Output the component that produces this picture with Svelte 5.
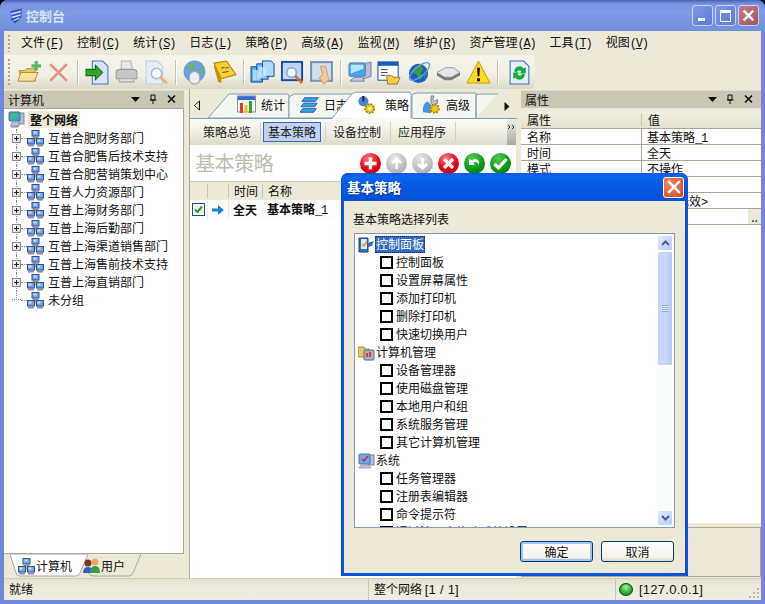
<script lang="ts">
  const menus = [
    { label: "文件", key: "F" },
    { label: "控制", key: "C" },
    { label: "统计", key: "S" },
    { label: "日志", key: "L" },
    { label: "策略", key: "P" },
    { label: "高级", key: "A" },
    { label: "监视", key: "M" },
    { label: "维护", key: "R" },
    { label: "资产管理", key: "A" },
    { label: "工具", key: "T" },
    { label: "视图", key: "V" },
  ];

  const groups = [
    "互普合肥财务部门",
    "互普合肥售后技术支持",
    "互普合肥营销策划中心",
    "互普人力资源部门",
    "互普上海财务部门",
    "互普上海后勤部门",
    "互普上海渠道销售部门",
    "互普上海售前技术支持",
    "互普上海直销部门",
  ];

  const props = [
    { name: "名称", value: "基本策略", tail: "_1" },
    { name: "时间", value: "全天" },
    { name: "模式", value: "不操作" },
    { name: "告警", value: "" },
    { name: "状态", value: "", tail: "<", after: "策略无效", end: ">" },
    { name: "备注", value: "", more: true },
  ];

  const policy = [
    { type: "panel", title: "控制面板", items: ["控制面板", "设置屏幕属性", "添加打印机", "删除打印机", "快速切换用户"] },
    { type: "manage", title: "计算机管理", items: ["设备管理器", "使用磁盘管理", "本地用户和组", "系统服务管理", "其它计算机管理"] },
    { type: "system", title: "系统", items: ["任务管理器", "注册表编辑器", "命令提示符", "通过注册表修改系统设置"] },
  ];
</script>

{#snippet net()}
  <svg class="i16" viewBox="0 0 17 17">
    <path d="M8.500 6v4M3.500 10.500h10" stroke="#e0a818" stroke-width="2" fill="none" />
    <rect x="5" y="0.500" width="7" height="5.500" fill="#6fa6ea" stroke="#3c4f96" />
    <rect x="6.500" y="1.500" width="3" height="2" fill="#c4e0ff" />
    <rect x="5.500" y="6" width="6" height="2" fill="#8a90aa" />
    <rect x="0.500" y="8.500" width="7" height="5.500" fill="#6fa6ea" stroke="#3c4f96" />
    <rect x="1.500" y="9.500" width="3" height="2" fill="#c4e0ff" />
    <rect x="1" y="14" width="6" height="2.500" fill="#8a90aa" />
    <rect x="9.500" y="8.500" width="7" height="5.500" fill="#6fa6ea" stroke="#3c4f96" />
    <rect x="10.500" y="9.500" width="3" height="2" fill="#c4e0ff" />
    <rect x="10" y="14" width="6" height="2.500" fill="#8a90aa" />
  </svg>
{/snippet}

{#snippet pc()}
  <svg class="i16" viewBox="0 0 17 17">
    <rect x="11" y="2" width="5" height="11" fill="#b8bed0" stroke="#7c84a0" />
    <rect x="1" y="1" width="11" height="9" rx="1" fill="#3f9ae8" stroke="#5a6a9a" />
    <path d="M2.500 2.500h8v3l-8 3z" fill="#3cc06a" />
    <path d="M4 11h6l1.500 3.500h-9z" fill="#c2c6d4" stroke="#7c84a0" stroke-width=".6" />
    <ellipse cx="6.500" cy="15.500" rx="4.500" ry="1.300" fill="#9ba1b6" />
  </svg>
{/snippet}

<div class="win">
  <header class="title">
    <svg class="shield" viewBox="0 0 16 16">
      <path d="M2.500 3L14 .5l-1 9.500-6 5.500-4-4z" fill="#2f56c8" />
      <path d="M3 6l10-2.500M3.500 9.500l9-2.500M5.500 12.500l6-2.500" stroke="#d2e0ff" stroke-width="1.300" />
    </svg>
    <span class="title-text">控制台</span>
    <div class="caption">
      <button class="cap" aria-label="最小化"><i class="min"></i></button>
      <button class="cap" aria-label="最大化"><i class="max"></i></button>
      <button class="cap close" aria-label="关闭">
        <svg viewBox="0 0 12 12"><path d="M1.500 1.500l9 9M10.500 1.500l-9 9" stroke="#fff" stroke-width="2.200" /></svg>
      </button>
    </div>
  </header>

  <div class="inner">
    <nav class="menubar">
      <i class="grip"></i>
      {#each menus as m}
        <span class="menu">{m.label}<span class="lat">(<u>{m.key}</u>)</span></span>
      {/each}
    </nav>

    <div class="toolbar">
      <i class="grip tall"></i>
      <span class="tb">
        <svg viewBox="0 0 26 26">
          <path d="M2 11h6l2-2h9v13H5z" fill="#e8c868" stroke="#b49238" />
          <path d="M1 22l3-9h18l-4 9z" fill="#f6e3a0" stroke="#b49238" />
          <path d="M20 1v10M15 6h10" stroke="#5cb85c" stroke-width="3.400" />
        </svg>
      </span>
      <span class="tb">
        <svg viewBox="0 0 24 24"><path d="M4 4l16 16M20 4L4 20" stroke="#e6908c" stroke-width="2.600" /></svg>
      </span>
      <i class="sep"></i>
      <span class="tb">
        <svg viewBox="0 0 24 24">
          <path d="M7 1h10l5 5v17H7z" fill="#d6e6f8" stroke="#4c74b0" />
          <path d="M1 9h9V5l7 7-7 7v-4H1z" fill="#2fa62f" stroke="#146a14" />
        </svg>
      </span>
      <span class="tb">
        <svg viewBox="0 0 24 24">
          <path d="M7 1h9l2 9H7z" fill="#e6e6e6" stroke="#b4b4b4" />
          <path d="M2 12q0-3 4-3h12q4 0 4 3v6H2z" fill="#c6c6c6" stroke="#9c9c9c" />
          <path d="M5 18h14v3H5z" fill="#e2e2e2" stroke="#a6a6a6" />
        </svg>
      </span>
      <span class="tb">
        <svg viewBox="0 0 24 24">
          <path d="M2 1h11l5 5v17H2z" fill="#e4ecf6" stroke="#c0cee0" />
          <circle cx="12" cy="13" r="5" fill="#fff" stroke="#a8bcd0" stroke-width="1.500" />
          <path d="M16 17l6 5" stroke="#e8b078" stroke-width="2.600" />
        </svg>
      </span>
      <i class="sep"></i>
      <span class="tb">
        <svg viewBox="0 0 24 24">
          <circle cx="12" cy="11" r="10.500" fill="#6fa0d8" />
          <path d="M4 8q5-7 10-5-2 5-6 6zM16 6l5 4-3 4z" fill="#6cb46c" />
          <path d="M7 17a5 6 0 0110 0v2a5 4 0 01-10 0z" fill="#eee" stroke="#aaa" />
        </svg>
      </span>
      <span class="tb">
        <svg viewBox="0 0 24 24">
          <path d="M2 3l12-2 9 13-14 4z" fill="#fad030" stroke="#b08810" />
          <path d="M2 3l7 15 0 4-3-1-4-14z" fill="#c89008" />
          <path d="M9 8l3-1M13 8l3-1M10 12l6-1" stroke="#555" stroke-width="1" />
        </svg>
      </span>
      <i class="sep"></i>
      <span class="tb">
        <svg viewBox="0 0 26 26">
          <path d="M1 7h9l3 3v13H1z" fill="#5aa4ec" stroke="#1a4aa0" />
          <path d="M7 4h9l3 3v13H7z" fill="#7cc0f4" stroke="#1a4aa0" />
          <path d="M13 1h9l3 3v13H13z" fill="#aadcfa" stroke="#1a4aa0" />
          <path d="M3 10v11h8V11zM9 7v11h8V8z" fill="#cfeeff" opacity=".7" />
        </svg>
      </span>
      <span class="tb">
        <svg viewBox="0 0 26 26">
          <rect x="2" y="2" width="21" height="19" fill="#bcd8f6" stroke="#1a4aa0" stroke-width="2" />
          <circle cx="12" cy="13" r="5" fill="#f0f8ff" stroke="#8aa4c4" stroke-width="1.500" />
          <path d="M16 17l7 7" stroke="#e46a20" stroke-width="3" />
        </svg>
      </span>
      <span class="tb">
        <svg viewBox="0 0 24 24">
          <rect x="2" y="2" width="20" height="18" fill="#cfe0f2" stroke="#7e94b4" stroke-width="2" />
          <path d="M11 6h5l3 13-5 4-4-6 3-3z" fill="#eec8a0" stroke="#d49e70" />
        </svg>
      </span>
      <i class="sep"></i>
      <span class="tb">
        <svg viewBox="0 0 26 26">
          <path d="M16 4l8-2v15l-8 3z" fill="#b8bcd4" stroke="#7c82a4" />
          <rect x="1" y="3" width="17" height="14" rx="1.500" fill="#3fa8f0" stroke="#6c789c" />
          <path d="M3 5h13v4L3 14z" fill="#b6e4ff" />
          <path d="M6 18h8l3 4H2z" fill="#c6cada" stroke="#7c82a4" />
        </svg>
      </span>
      <span class="tb">
        <svg viewBox="0 0 26 26">
          <rect x="1" y="2" width="21" height="19" fill="#fff" stroke="#1a4aa0" />
          <rect x="1" y="2" width="21" height="4" fill="#1a5cc0" />
          <path d="M4 10h7M4 13h7M4 16h5" stroke="#444" />
          <path d="M10 16h5l2 2h7l-3 7H11z" fill="#f6cc48" stroke="#9c7a1c" />
        </svg>
      </span>
      <span class="tb">
        <svg viewBox="0 0 26 26">
          <circle cx="12" cy="14" r="10" fill="#1a60c8" />
          <path d="M8 7l6-2 3 4-3 5 2 4-3 3-3-6-4-2zM18 13l3 1-3 5z" fill="#3c9c3c" />
          <ellipse cx="13" cy="12" rx="13" ry="5" fill="none" stroke="#64a0e0" stroke-width="1.400" transform="rotate(-40 13 12)" />
        </svg>
      </span>
      <span class="tb">
        <svg viewBox="0 0 26 26">
          <path d="M1 13l9-5h8l7 5-9 5H9z" fill="#e6e6e6" stroke="#9a9a9a" />
          <path d="M1 13v3l8 5h7l9-5v-3l-9 5H9z" fill="#7c7c7c" />
        </svg>
      </span>
      <span class="tb">
        <svg viewBox="0 0 26 26">
          <path d="M13 1l12 23H1z" fill="#ffd91c" stroke="#c49a10" />
          <path d="M11.500 8h3l-.6 9h-1.800zM11.500 19h3v3h-3z" fill="#111" />
        </svg>
      </span>
      <i class="sep"></i>
      <span class="tb refresh">
        <svg viewBox="0 0 24 24">
          <path d="M3 1h13l5 5v17H3z" fill="#e4f0fc" stroke="#3c6cb0" />
          <path d="M7 11a5 5 0 019-3l2-1v6h-6l2-2a3 3 0 00-5 1zM17 14a5 5 0 01-9 3l-2 1v-6h6l-2 2a3 3 0 005-1z" fill="#1fa83a" />
        </svg>
      </span>
    </div>

    <div class="panes">
      <aside class="left">
        <div class="pane-head">
          <span>计算机</span>
          <svg class="head-btns" viewBox="0 0 48 11">
            <path d="M0 3h9L4.500 8z" fill="#111" />
            <path d="M20 1v5h4V1zM19 6h6.500M22 6v4" stroke="#111" fill="none" />
            <path d="M37 1.500l7 7M44 1.500l-7 7" stroke="#111" stroke-width="1.600" />
          </svg>
        </div>
        <div class="tree">
          <div class="root">
            {@render pc()}
            <b>整个网络</b>
          </div>
          {#each groups as g}
            <div class="node">
              <i class="plus"></i>
              {@render net()}
              <span>{g}</span>
            </div>
          {/each}
          <div class="node last">
            <i class="noplus"></i>
            {@render net()}
            <span>未分组</span>
          </div>
        </div>
        <div class="bottom-tabs">
          <svg class="tab-shape" viewBox="0 0 140 24">
            <path d="M72 0l6 10 3 10q1 2 4 2h36q3 0 4-3l8-19" fill="#ece9d8" stroke="#aca899" />
            <path d="M2 0l6 19q1 3 4 3h56q3 0 4-3l8-19z" fill="#fff" stroke="#aca899" />
          </svg>
          <span class="btab first">{@render net()}<span>计算机</span></span>
          <span class="btab">
            <svg class="i16" viewBox="0 0 17 17">
              <circle cx="5" cy="5" r="3.500" fill="#7a3a1c" />
              <path d="M0 15q0-6 5-6t5 6z" fill="#3c5cc8" />
              <circle cx="12" cy="4" r="3.500" fill="#f0a860" />
              <path d="M7 15q0-7 5-7t5 7z" fill="#3c9c4c" />
            </svg>
            <span>用户</span>
          </span>
        </div>
      </aside>

      <main class="center">
        <div class="tabs">
          <svg class="tab-shape" viewBox="0 0 327 29">
            <path d="M18 28L39 4h58q2 0 2 2v22z" fill="#f6f6f0" stroke="#7f9db9" />
            <path d="M99 28V7l5-3h58l2 3v21z" fill="#f6f6f0" stroke="#7f9db9" />
            <path d="M222 28V5q3-2 5-2h59v25M286 28V6q-1-2 4-2h18" fill="#f6f6f0" stroke="#7f9db9" />
            <path d="M0 28.500h143M223 28.500h104" stroke="#7f9db9" fill="none" />
          </svg>
          <span class="tab-arrow">
            <svg viewBox="0 0 8 11"><path d="M6.500 1v9L1.500 5.500z" fill="#fff" stroke="#111" /></svg>
          </span>
          <span class="tab stat">
            <svg class="i20" viewBox="0 0 20 20">
              <rect x="0.500" y="1" width="18" height="4" fill="#3a6ad0" />
              <rect x="0.500" y="1" width="18" height="16" fill="none" stroke="#7d8fb8" />
              <rect x="3" y="8" width="3" height="10" fill="#e04020" />
              <rect x="7.500" y="10" width="3" height="8" fill="#f0c020" />
              <rect x="12" y="6" width="3" height="12" fill="#30a030" />
            </svg>
            统计
          </span>
          <span class="tab log">
            <svg class="i20" viewBox="0 0 22 20">
              <path d="M5 2h15l-3 4H2zM4 8h15l-3 4H1zM3 14h15l-3 4H0z" fill="#3e9ee6" stroke="#1c5aa8" />
            </svg>
            日志
          </span>
          <svg class="active-shape" viewBox="0 0 82 29">
            <path d="M0 28.500L20 4q2-2 5-2h53q2 0 2 3v24H0z" fill="#fff" />
            <path d="M0 28.500L20 4q2-2 5-2h53q2 0 2 3v24" fill="none" stroke="#7f9db9" />
          </svg>
          <span class="tab act">
            <svg class="i20" viewBox="0 0 22 20">
              <circle cx="7" cy="6" r="5.500" fill="#4a86c8" />
              <path d="M7 0v6" stroke="#123" stroke-width="2" />
              <circle cx="14" cy="14" r="5" fill="#f4c818" stroke="#a08000" stroke-dasharray="2 1.400" stroke-width="2" />
              <circle cx="14" cy="14" r="2" fill="#fff6c0" />
            </svg>
            策略
          </span>
          <span class="tab adv">
            <svg class="i20" viewBox="0 0 22 20">
              <path d="M10 0l3 0-1 4 2 2 3-2v4l-5 2-2-2z" fill="#c2c2ca" stroke="#777" />
              <path d="M1 18q-1-9 5-12l6 6-2 7z" fill="#4a90e0" />
              <circle cx="14" cy="14" r="4.500" fill="#f4c818" stroke="#a08000" stroke-dasharray="2 1.400" stroke-width="2" />
            </svg>
            高级
          </span>
          <span class="tab-arrow right">
            <svg viewBox="0 0 8 11"><path d="M1.500 1v9l5-4.500z" fill="#111" /></svg>
          </span>
        </div>

        <div class="subbar">
          <span class="sub">策略总览</span><i class="subsep"></i>
          <span class="sub on">基本策略</span><i class="subsep"></i>
          <span class="sub">设备控制</span><i class="subsep"></i>
          <span class="sub">应用程序</span><i class="subsep"></i>
          <span class="subend">
            <svg viewBox="0 0 7 5"><path d="M0 0l2 2-2 2M4 0l2 2-2 2" fill="none" stroke="#333" /></svg>
          </span>
        </div>

        <div class="plan-head">
          <span class="plan-title">基本策略</span>
          <div class="rounds">
            <span class="round red"><svg viewBox="0 0 21 21"><path d="M10.500 4.500v12M4.500 10.500h12" stroke="#fff" stroke-width="3.400" /></svg></span>
            <span class="round grey"><svg viewBox="0 0 21 21"><path d="M10.500 16V6M6 10l4.500-4.500L15 10" fill="none" stroke="#fff" stroke-width="2.600" /></svg></span>
            <span class="round grey"><svg viewBox="0 0 21 21"><path d="M10.500 5v10M6 11l4.500 4.500L15 11" fill="none" stroke="#fff" stroke-width="2.600" /></svg></span>
            <span class="round red"><svg viewBox="0 0 21 21"><path d="M6 6l9 9M15 6l-9 9" stroke="#fff" stroke-width="3.200" /></svg></span>
            <span class="round green"><svg viewBox="0 0 21 21"><path d="M5 6v6h6l-2-2q4-3 6 2 1-6-4-6-2 0-3 1.500z" fill="#fff" /></svg></span>
            <span class="round green"><svg viewBox="0 0 21 21"><path d="M4.500 11l4 4 8-9" fill="none" stroke="#fff" stroke-width="3.200" /></svg></span>
          </div>
        </div>

        <div class="table-head">
          <span></span><span></span><span>时间</span><span>名称</span>
        </div>
        <div class="table-row">
          <span class="cell-check">
            <i class="green-check">
              <svg viewBox="0 0 11 11"><path d="M2 5.500l2.500 2.500 4.500-5.500" fill="none" stroke="#1fa02f" stroke-width="2" /></svg>
            </i>
          </span>
          <span class="cell-check">
            <svg class="row-arrow" viewBox="0 0 12 10"><path d="M0 3.500h6V0l6 5-6 5V6.500H0z" fill="#1c84d8" /></svg>
          </span>
          <b>全天</b>
          <b>基本策略<span class="lat">_1</span></b>
        </div>
      </main>

      <aside class="right">
        <div class="pane-head">
          <span>属性</span>
          <svg class="head-btns" viewBox="0 0 48 11">
            <path d="M0 3h9L4.500 8z" fill="#111" />
            <path d="M20 1v5h4V1zM19 6h6.500M22 6v4" stroke="#111" fill="none" />
            <path d="M37 1.500l7 7M44 1.500l-7 7" stroke="#111" stroke-width="1.600" />
          </svg>
        </div>
        <div class="grid">
          <div class="grid-head"><span>属性</span><span>值</span></div>
          {#each props as p}
            <div class="grid-row">
              <span>{p.name}</span>
              <span class="val">
                <span class="v">{p.value}{#if p.tail}<span class="lat">{p.tail}</span>{/if}{p.after ?? ""}{#if p.end}<span class="lat">{p.end}</span>{/if}</span>
                {#if p.more}<i class="more">..</i>{/if}
              </span>
            </div>
          {/each}
          <div class="grid-fill"></div>
          <div class="desc"><div class="desc-box"></div></div>
        </div>
      </aside>
    </div>

    <footer class="status">
      <span class="st one">就绪</span>
      <span class="st two">整个网络 <span class="lats">[1 / 1]</span></span>
      <span class="st three">
        <i class="led"></i>
        <span class="lats">[127.0.0.1]</span>
        <svg class="size-grip" viewBox="0 0 12 12">
          <path d="M9 1h2v2H9zM5 5h2v2H5zM9 5h2v2H9zM1 9h2v2H1zM5 9h2v2H5zM9 9h2v2H9z" fill="#bdb9a6" />
        </svg>
      </span>
    </footer>
  </div>

  <section class="dialog">
    <div class="dlg-title">
      <span>基本策略</span>
      <button class="dlg-close" aria-label="关闭">
        <svg viewBox="0 0 12 12"><path d="M1 1l10 10M11 1L1 11" stroke="#fff" stroke-width="2.200" /></svg>
      </button>
    </div>
    <div class="dlg-body">
      <p class="dlg-label">基本策略选择列表</p>
      <div class="listbox">
        <div class="list">
          {#each policy as g}
            <div class="group" class:first={g.type === "panel"}>
              {#if g.type === "panel"}
                <svg class="i16" viewBox="0 0 17 17">
                  <path d="M1 2h9v14H1z" fill="#2f6ec0" stroke="#1c3c80" />
                  <path d="M3 3h6v10H3z" fill="#dfeaf8" />
                  <path d="M4 8l2 2 3-5" fill="none" stroke="#e0a020" stroke-width="1.500" />
                  <path d="M10 7l6-2-2 5-4 1z" fill="#2f6ec0" />
                </svg>
              {:else if g.type === "manage"}
                <svg class="i16" viewBox="0 0 17 17">
                  <path d="M0 3h6l1 2h4v8H0z" fill="#e6c468" stroke="#a88a30" />
                  <rect x="6" y="6" width="10" height="10" rx="1" fill="#a8b0c8" stroke="#60688a" />
                  <path d="M8 13V9h2v4zM11 13V8h2v5z" fill="#d04030" />
                </svg>
              {:else}
                <svg class="i16" viewBox="0 0 17 17">
                  <rect x="10" y="3" width="6" height="10" fill="#b8bed0" stroke="#7c84a0" />
                  <rect x="1" y="2" width="11" height="10" rx="1" fill="#66aaee" stroke="#5a6a9a" />
                  <path d="M4 7l2 2 4-5" fill="none" stroke="#d02030" stroke-width="1.500" />
                  <path d="M3 13h8l2 3H1z" fill="#c2c6d4" stroke="#7c84a0" stroke-width=".6" />
                </svg>
              {/if}
              <span class="gt">{g.title}</span>
            </div>
            {#each g.items as item}
              <div class="item"><i class="box"></i><span>{item}</span></div>
            {/each}
          {/each}
        </div>
        <div class="scroll">
          <span class="sb">
            <svg viewBox="0 0 9 6"><path d="M1 5l3.500-3.500L8 5" fill="none" stroke="#4d6185" stroke-width="2" /></svg>
          </span>
          <span class="thumb"><i></i></span>
          <span class="track"></span>
          <span class="sb">
            <svg viewBox="0 0 9 6"><path d="M1 1l3.500 3.500L8 1" fill="none" stroke="#4d6185" stroke-width="2" /></svg>
          </span>
        </div>
      </div>
      <div class="dlg-actions">
        <button class="btn def">确定</button>
        <button class="btn">取消</button>
      </div>
    </div>
  </section>
</div>

<style>
  :global(body) {
    margin: 0;
    background: #000;
  }
  .win {
    position: relative;
    width: 765px;
    height: 604px;
    overflow: hidden;
    display: flex;
    flex-direction: column;
    background: #7088dc;
    border-radius: 8px 8px 0 0;
    font: 12px/16px "Noto Sans CJK SC", "Liberation Sans", sans-serif;
    color: #111;
  }
  i {
    font-style: normal;
    display: block;
    flex: none;
  }
  svg {
    display: block;
    flex: none;
  }
  .lat {
    font: 12px/16px "Liberation Mono", monospace;
    letter-spacing: -1.200px;
  }
  .lats {
    font: 13px/16px "Liberation Sans", sans-serif;
    letter-spacing: 0.250px;
  }
  .i16 {
    width: 17px;
    height: 17px;
  }
  .i20 {
    width: 20px;
    height: 20px;
  }

  /* title bar */
  .title {
    height: 31px;
    flex: none;
    display: flex;
    align-items: center;
    padding: 0 5px 0 8px;
    box-sizing: border-box;
    background: linear-gradient(#4a62b8 0, #7694e2 4px, #7f9de4 12px, #7090dc 30px);
  }
  .shield {
    width: 16px;
    height: 16px;
  }
  .title-text {
    margin-left: 2px;
    font-size: 13px;
    font-weight: 700;
    color: #d8e2f6;
  }
  .caption {
    margin-left: auto;
    display: flex;
    gap: 2px;
    margin-right: 1px;
  }
  .cap {
    width: 21px;
    height: 21px;
    padding: 0;
    display: flex;
    align-items: center;
    justify-content: center;
    border: 1px solid #c8d4f4;
    border-radius: 3px;
    background: linear-gradient(135deg, #7d9ae8, #5a78d8);
  }
  .cap.close {
    background: linear-gradient(135deg, #c07f8c, #a8505c);
  }
  .cap.close svg {
    width: 13px;
    height: 13px;
  }
  .min {
    width: 7px;
    height: 3px;
    background: #fff;
    margin-top: 8px;
    margin-right: 3px;
  }
  .max {
    width: 9px;
    height: 8px;
    border: 1px solid #fff;
    border-top-width: 3px;
  }

  .inner {
    flex: 1;
    margin: 0 4px 4px;
    display: flex;
    flex-direction: column;
    background: #ece9d8;
    min-height: 0;
  }

  /* menu + toolbar */
  .menubar {
    height: 24px;
    flex: none;
    display: flex;
    align-items: center;
    padding-left: 4px;
  }
  .grip {
    width: 2px;
    height: 17px;
    margin-right: 9px;
    background: repeating-linear-gradient(#a9a691 0 2px, transparent 2px 4px);
  }
  .grip.tall {
    height: 26px;
    margin-right: 7px;
  }
  .menu {
    margin: 0 12px 0 2px;
    white-space: nowrap;
  }
  .toolbar {
    height: 34px;
    width: 531px;
    flex: none;
    box-sizing: border-box;
    display: flex;
    align-items: center;
    padding-left: 4px;
    background: linear-gradient(#f6f5ec, #f1efe4 60%, #dcd9c6);
    border-radius: 0 5px 5px 0;
  }
  .tb {
    width: 24px;
    height: 26px;
    margin-right: 5.500px;
    display: flex;
    align-items: center;
    justify-content: center;
  }
  .tb svg {
    width: 25px;
    height: 25px;
  }
  .tb.refresh {
    margin-left: 3px;
  }
  .sep {
    width: 1px;
    height: 25px;
    margin: 0 6px 0 1px;
    background: #c5c2b0;
    border-right: 1px solid #fff;
  }

  .panes {
    flex: 1;
    min-height: 0;
    display: flex;
  }

  /* side panels */
  .left {
    width: 180px;
    flex: none;
    display: flex;
    flex-direction: column;
    padding-top: 1px;
    box-sizing: border-box;
  }
  .pane-head {
    height: 18px;
    flex: none;
    display: flex;
    align-items: center;
    padding: 0 5px 0 4px;
    background: #c9c6b5;
    border-top: 1px solid #dfdccb;
    box-sizing: border-box;
    font-size: 12px;
  }
  .head-btns {
    width: 48px;
    height: 11px;
    margin-left: auto;
  }
  .tree {
    flex: 1;
    background: #fff;
    border: 1px solid #aca899;
    border-left: 0;
    box-sizing: border-box;
    min-height: 0;
  }
  .root {
    height: 19px;
    display: flex;
    align-items: center;
    padding-left: 4px;
    margin-top: 1px;
  }
  .root b {
    margin-left: 3px;
    padding: 1px 2px 0;
    background: #ece9d8;
    height: 17px;
    box-sizing: border-box;
  }
  .node {
    height: 18px;
    display: flex;
    align-items: center;
    padding-left: 8px;
    position: relative;
  }
  .node::before {
    content: "";
    position: absolute;
    left: 12px;
    top: 0;
    height: 18px;
    border-left: 1px dotted #8a8a8a;
  }
  .node::after {
    content: "";
    position: absolute;
    left: 17px;
    top: 9px;
    width: 6px;
    border-top: 1px dotted #8a8a8a;
  }
  .node.last::before {
    height: 9px;
  }
  .plus {
    width: 9px;
    height: 9px;
    box-sizing: border-box;
    border: 1px solid #8e8e8e;
    background:
      linear-gradient(#222, #222) center / 5px 1px no-repeat,
      linear-gradient(#222, #222) center / 1px 5px no-repeat,
      linear-gradient(135deg, #fff, #d8d4c8);
    position: relative;
    z-index: 1;
  }
  .noplus {
    width: 9px;
    height: 1px;
    border-top: 1px dotted #8a8a8a;
  }
  .node svg {
    margin-left: 6px;
  }
  .node span {
    margin-left: 4px;
    white-space: nowrap;
  }
  .bottom-tabs {
    height: 24px;
    flex: none;
    position: relative;
    display: flex;
    align-items: center;
  }
  .tab-shape {
    position: absolute;
    left: 4px;
    top: 0;
    width: 140px;
    height: 24px;
  }
  .btab {
    position: relative;
    display: flex;
    align-items: center;
    gap: 1px;
    margin-left: 11px;
  }
  .btab.first {
    margin-left: 14px;
  }

  /* centre */
  .center {
    width: 327px;
    margin-left: 5px;
    flex: none;
    background: #fff;
    border-left: 1px solid #aca899;
    box-sizing: border-box;
    display: flex;
    flex-direction: column;
  }
  .tabs {
    height: 30px;
    flex: none;
    position: relative;
    background: #ece9d8;
    display: flex;
    align-items: center;
    padding-top: 2px;
    box-sizing: border-box;
  }
  .tabs .tab-shape {
    left: 0;
    top: 1px;
    width: 327px;
    height: 29px;
  }
  .active-shape {
    position: absolute;
    left: 142px;
    top: 1px;
    width: 81px;
    height: 29px;
    z-index: 2;
  }
  .tab-arrow {
    position: relative;
    margin-left: 3px;
    width: 8px;
    height: 11px;
    flex: none;
  }
  .tab-arrow svg {
    width: 8px;
    height: 11px;
  }
  .tab-arrow.right {
    margin-left: 33px;
    z-index: 3;
  }
  .tab {
    position: relative;
    display: flex;
    align-items: center;
    gap: 4px;
    white-space: nowrap;
    flex: none;
  }
  .tab.stat {
    margin-left: 36px;
  }
  .tab.log {
    margin-left: 15px;
  }
  .tab.act {
    margin-left: 9px;
    z-index: 3;
    gap: 8px;
  }
  .tab.adv {
    margin-left: 13px;
  }
  .subbar {
    height: 26px;
    flex: none;
    display: flex;
    align-items: center;
    padding-left: 8px;
    background: linear-gradient(#fbfbf6, #f0efe6 50%, #dedbca);
    color: #222;
  }
  .sub {
    box-sizing: border-box;
    width: 58px;
    height: 20px;
    line-height: 18px;
    text-align: center;
    border: 1px solid transparent;
    white-space: nowrap;
  }
  .sub.on {
    background: #c1d2ee;
    border-color: #316ac5;
  }
  .subsep {
    width: 1px;
    height: 20px;
    margin: 0 2px 0 4px;
    background: #d3d0bf;
  }
  .subend {
    margin-left: auto;
    width: 9px;
    height: 26px;
    background: linear-gradient(#eeeeea, #a8a8a0);
    display: flex;
    justify-content: center;
    padding-top: 6px;
    box-sizing: border-box;
  }
  .subend svg {
    width: 7px;
    height: 5px;
  }
  .plan-head {
    height: 36px;
    flex: none;
    display: flex;
    align-items: center;
    padding: 0 5px;
  }
  .plan-title {
    font-size: 20px;
    line-height: 24px;
    letter-spacing: -0.400px;
    color: #c0bcae;
  }
  .rounds {
    margin-left: auto;
    display: flex;
    gap: 5px;
  }
  .round {
    width: 21px;
    height: 21px;
    border-radius: 50%;
  }
  .round.red {
    background: radial-gradient(circle at 40% 25%, #ff7a7a, #e60012 55%, #a80010);
  }
  .round.grey {
    background: radial-gradient(circle at 40% 25%, #e8e8e8, #bcbcbc 60%, #9c9c9c);
  }
  .round.green {
    background: radial-gradient(circle at 40% 25%, #58c858, #0a9a14 55%, #056a0c);
  }
  .table-head {
    height: 19px;
    flex: none;
    display: grid;
    grid-template-columns: 18px 21px 34px 1fr;
    align-items: center;
    background: #ece9d8;
    border-top: 1px solid #d0cdbc;
    box-sizing: border-box;
  }
  .table-head span {
    height: 14px;
    line-height: 14px;
    padding-left: 5px;
    border-right: 1px solid #c6c3b2;
  }
  .table-head span:last-child {
    border-right: 0;
  }
  .table-row {
    height: 19px;
    flex: none;
    display: grid;
    grid-template-columns: 18px 21px 34px 1fr;
    align-items: center;
    background: #fdfdfb;
  }
  .table-row b {
    padding-left: 4px;
    white-space: nowrap;
  }
  .cell-check {
    display: flex;
    justify-content: center;
    height: 19px;
    align-items: center;
    border-right: 1px solid #ece9d8;
  }
  .green-check {
    width: 13px;
    height: 13px;
    border: 1px solid #1c5180;
    box-sizing: border-box;
    background: #f4f4ee;
  }
  .row-arrow {
    width: 12px;
    height: 10px;
  }

  .right {
    width: 240px;
    margin-left: 5px;
    flex: none;
    display: flex;
    flex-direction: column;
    padding-top: 1px;
    box-sizing: border-box;
  }
  .grid {
    flex: 1;
    display: flex;
    flex-direction: column;
    margin-top: 3px;
    min-height: 0;
  }
  .grid-head,
  .grid-row {
    flex: none;
    display: grid;
    grid-template-columns: 121px 1fr;
  }
  .grid-head {
    height: 18px;
    line-height: 17px;
    background: linear-gradient(#f1efe2, #e4e1d0);
    border-bottom: 1px solid #aca899;
    box-sizing: border-box;
  }
  .grid-head span {
    padding-left: 6px;
  }
  .grid-head span:first-child {
    border-right: 1px solid #c6c3b2;
    padding-left: 6px;
    margin: 2px 0;
    line-height: 13px;
  }
  .grid-row {
    height: 16px;
    line-height: 15px;
    background: #fff;
    border-bottom: 1px solid #aca899;
    box-sizing: border-box;
  }
  .grid-row > span {
    padding-left: 6px;
  }
  .grid-row > span:first-child {
    border-right: 1px solid #aca899;
  }
  .grid-row > .val {
    display: flex;
    justify-content: space-between;
    padding-left: 5px;
  }
  .v {
    white-space: nowrap;
  }
  .more {
    width: 13px;
    background: #ece9d8;
    text-align: center;
  }
  .grid-fill {
    flex: 1;
    background: #fff;
  }
  .desc {
    height: 55px;
    flex: none;
    padding: 4px 0 1px;
    box-sizing: border-box;
    background: #ece9d8;
  }
  .desc-box {
    height: 100%;
    border: 1px solid #aca899;
    border-left: 0;
    box-sizing: border-box;
  }

  /* status bar */
  .status {
    height: 22px;
    flex: none;
    display: flex;
    align-items: center;
    background: linear-gradient(#e4e1d1, #ece9d8 30%, #f0eee2);
    border-top: 1px solid #d0cdbc;
    box-sizing: border-box;
  }
  .st {
    height: 21px;
    line-height: 20px;
    box-sizing: border-box;
    white-space: nowrap;
    padding-left: 5px;
  }
  .st.one {
    width: 364px;
  }
  .st.two {
    width: 247px;
    border-left: 1px solid #c8c5b4;
  }
  .st.three {
    flex: 1;
    display: flex;
    align-items: center;
    gap: 6px;
    padding-left: 3px;
    border-left: 1px solid #c8c5b4;
  }
  .led {
    width: 14px;
    height: 13px;
    border-radius: 50%;
    background: radial-gradient(circle at 50% 30%, #a8f0a0, #24b030 60%, #0c6a18);
    border: 1px solid #0a4a14;
    box-sizing: border-box;
  }
  .size-grip {
    width: 12px;
    height: 12px;
    margin: 7px 1px 0 auto;
  }

  /* dialog */
  .dialog {
    position: absolute;
    left: 341px;
    top: 173px;
    width: 347px;
    height: 403px;
    box-sizing: border-box;
    display: flex;
    flex-direction: column;
    background: #0a52dc;
    border-radius: 7px 7px 0 0;
    padding: 0 3px 3px;
  }
  .dlg-title {
    height: 28px;
    flex: none;
    display: flex;
    align-items: center;
    color: #fff;
    font-size: 13.500px;
    font-weight: 700;
    text-shadow: 1px 1px 0 #06319c;
    margin: 0 -3px;
    padding: 0 4px 0 6px;
    background: linear-gradient(#0a5ae6 0, #0a66f0 4px, #0558e2 14px, #0450da 28px);
    border-radius: 7px 7px 0 0;
  }
  .dlg-close {
    margin-left: auto;
    width: 21px;
    height: 21px;
    padding: 0;
    display: flex;
    align-items: center;
    justify-content: center;
    border: 1px solid #fff;
    border-radius: 3px;
    background: radial-gradient(circle at 30% 30%, #ee8a6a, #d8421e);
  }
  .dlg-close svg {
    width: 14px;
    height: 14px;
  }
  .dlg-body {
    flex: 1;
    min-height: 0;
    background: #ece9d8;
    padding: 10px 10px 0 9px;
    display: flex;
    flex-direction: column;
  }
  .dlg-label {
    margin: 0 0 6px;
    height: 16px;
    line-height: 16px;
  }
  .listbox {
    height: 295px;
    flex: none;
    display: flex;
    margin-left: 1px;
    background: #fff;
    border: 1px solid #7f9db9;
    box-sizing: border-box;
    overflow: hidden;
  }
  .list {
    flex: 1;
    min-width: 0;
    overflow: hidden;
    padding: 1px 0 0 3px;
  }
  .group,
  .item {
    height: 18px;
    display: flex;
    align-items: center;
    white-space: nowrap;
  }
  .gt {
    height: 17px;
    line-height: 16px;
    padding: 0 1px;
  }
  .group.first .gt {
    background: #316ac5;
    color: #fff;
    outline: 1px dotted #15294e;
    outline-offset: -1px;
  }
  .item {
    padding-left: 22px;
  }
  .box {
    width: 13px;
    height: 13px;
    border: 2px solid #000;
    box-sizing: border-box;
    margin-right: 3px;
  }
  .scroll {
    width: 17px;
    flex: none;
    padding: 1px 1px 1px 0;
    box-sizing: border-box;
    display: flex;
    flex-direction: column;
    background: #fbfcfe;
  }
  .sb {
    height: 16px;
    flex: none;
    display: flex;
    align-items: center;
    justify-content: center;
    background: linear-gradient(135deg, #e0e8fe, #b8cdfa);
    border: 1px solid #fff;
    border-radius: 2px;
    box-sizing: border-box;
  }
  .sb svg {
    width: 9px;
    height: 6px;
  }
  .thumb {
    height: 115px;
    flex: none;
    display: flex;
    align-items: center;
    justify-content: center;
    background: linear-gradient(90deg, #c4d5fc, #c9d9fd 50%, #b4c9f8);
    border: 1px solid #fff;
    border-radius: 2px;
    box-sizing: border-box;
  }
  .thumb i {
    width: 7px;
    height: 7px;
    background: repeating-linear-gradient(#8ea9e8 0 1px, #e6edfe 1px 2px);
  }
  .track {
    flex: 1;
  }
  .dlg-actions {
    display: flex;
    justify-content: flex-end;
    gap: 8px;
    margin-top: 13px;
    margin-right: 1px;
  }
  .btn {
    width: 73px;
    height: 21px;
    padding: 0;
    border: 1px solid #003c74;
    border-radius: 3px;
    background: linear-gradient(#fff, #f4f3ea 80%, #dcd8c8);
    font: inherit;
    line-height: 17px;
    color: #111;
  }
  .btn.def {
    box-shadow: inset 0 0 0 2px #a6c1ea;
  }
</style>
